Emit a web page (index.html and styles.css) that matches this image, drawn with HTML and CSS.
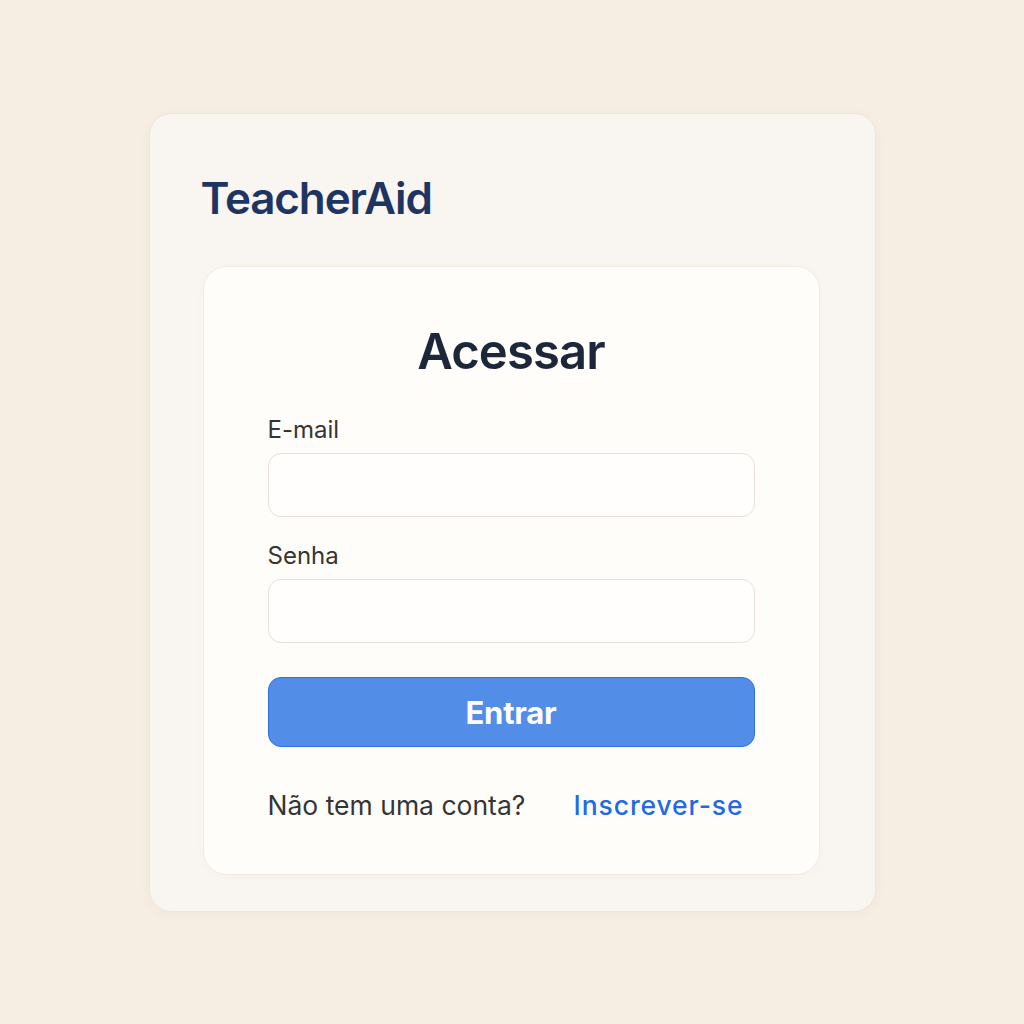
FILE: index.html
```html
<!DOCTYPE html>
<html lang="pt">
<head>
<meta charset="utf-8">
<title>TeacherAid - Acessar</title>
<link rel="stylesheet" href="styles.css">
</head>
<body>
<main class="page">
  <section class="shell">
    <h1 class="logo">TeacherAid</h1>
    <div class="card">
      <h2 class="title">Acessar</h2>
      <form class="form">
        <label class="field">
          <span class="label">E-mail</span>
          <input class="input" type="email">
        </label>
        <label class="field field-last">
          <span class="label">Senha</span>
          <input class="input" type="password">
        </label>
        <button class="btn" type="button">Entrar</button>
      </form>
      <p class="footer">
        <span class="muted">Não tem uma conta?</span>
        <a class="link" href="#">Inscrever-se</a>
      </p>
    </div>
  </section>
</main>
</body>
</html>
```
FILE: styles.css
```css
* { box-sizing: border-box; }
html, body {
  margin: 0;
  padding: 0;
  background: #f6ede3;
  font-family: Inter, "Noto Sans", sans-serif;
}
.page {
  width: 1024px;
  height: 1024px;
  display: flex;
  justify-content: center;
  padding-top: 113px;
}
.shell {
  width: 727px;
  height: 799px;
  background: #f9f5f0;
  border: 1px solid #efe6db;
  border-radius: 22px;
  padding: 58px 53px 0 53px;
  box-shadow: 0 2px 10px rgba(200, 180, 150, 0.08);
}
.logo {
  margin: 0 0 42px 0;
  font-size: 44px;
  font-weight: 600;
  letter-spacing: -1.15px;
  color: #1e3461;
  line-height: 52px;
  text-indent: -2px;
}
.card {
  width: 617px;
  height: 609px;
  background: #fffdfa;
  border-radius: 24px;
  border: 1px solid #f3ebe2;
  padding: 55px 64px 0 64px;
  box-shadow: 0 2px 8px rgba(200, 180, 150, 0.06);
}
.title {
  margin: 0 0 34px 0;
  text-align: center;
  font-size: 49px;
  font-weight: 600;
  color: #1c2839;
  line-height: 60px;
  letter-spacing: -0.9px;
}
.form {
  display: flex;
  flex-direction: column;
}
.field {
  display: flex;
  flex-direction: column;
  margin-bottom: 25px;
}
.field-last { margin-bottom: 34px; }
.label {
  font-size: 24px;
  line-height: 28px;
  color: #353535;
  margin-bottom: 9px;
}
.input {
  width: 487px;
  height: 64px;
  border: 1.5px solid #e8e0d6;
  border-radius: 13px;
  background: #fffefd;
  outline: none;
}
.btn {
  width: 487px;
  height: 70px;
  background: #528ee8;
  border: 1.5px solid #2f6fe2;
  border-radius: 13px;
  color: #ffffff;
  font-family: Inter, "Noto Sans", sans-serif;
  font-size: 31px;
  font-weight: 700;
  letter-spacing: -0.2px;
  padding: 0;
}
.footer {
  margin: 43px 0 0 0;
  display: flex;
  justify-content: space-between;
  width: 476px;
  font-size: 26.5px;
  line-height: 30px;
}
.muted { color: #353535; }
.link {
  color: #1f6ae6;
  text-decoration: none;
  font-weight: 500;
  letter-spacing: 0.9px;
}
```
